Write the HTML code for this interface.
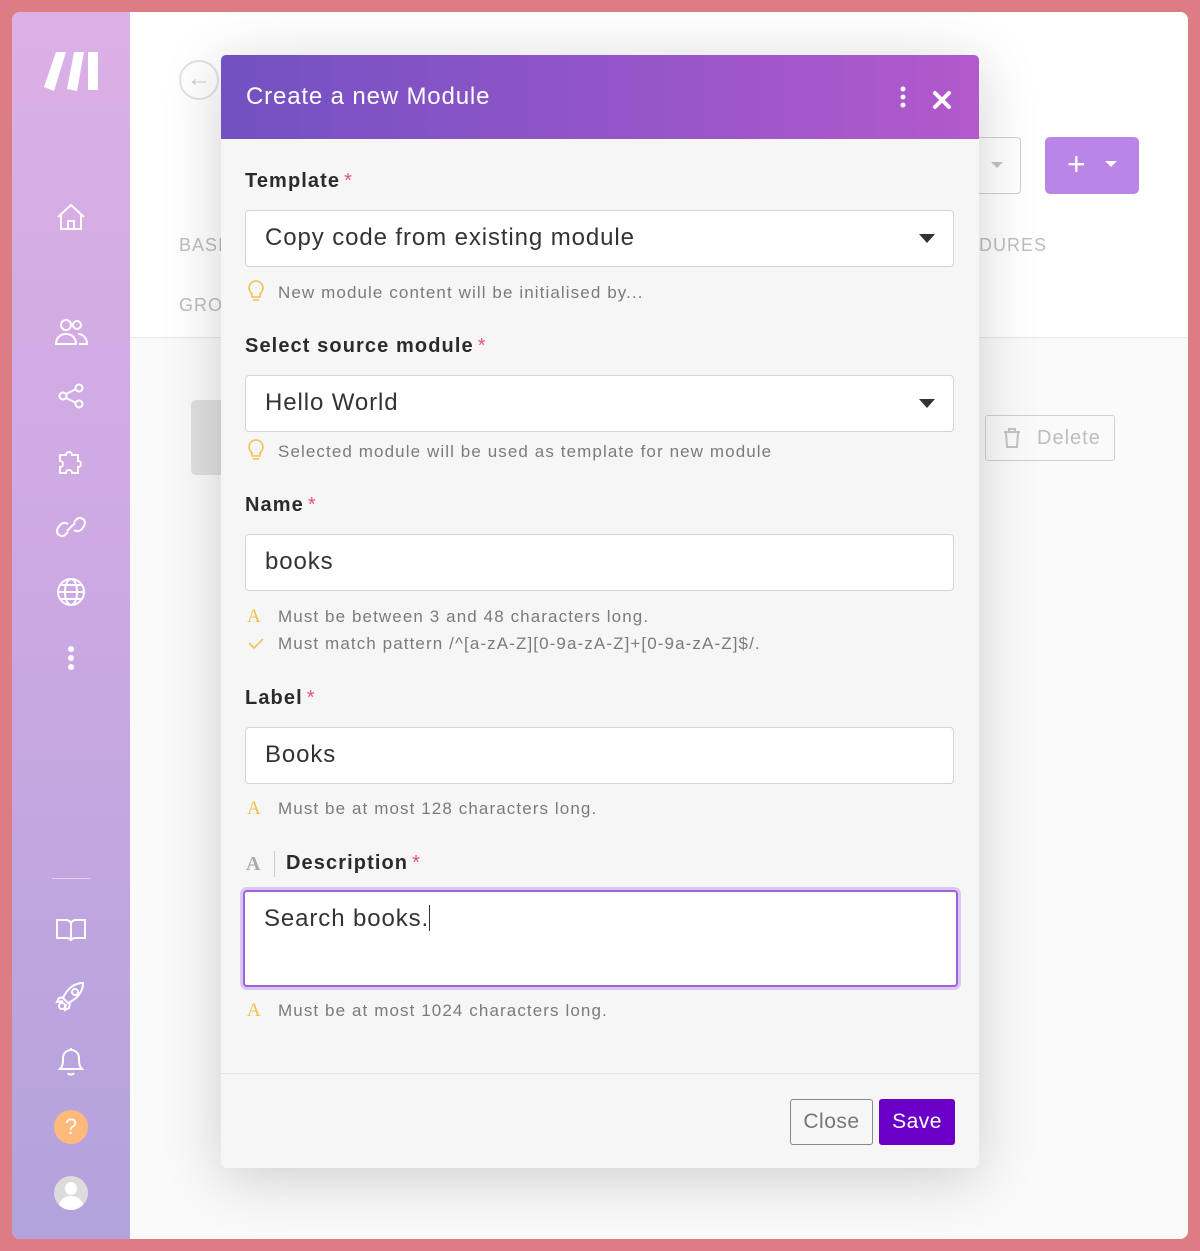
<!DOCTYPE html>
<html><head><meta charset="utf-8"><style>
*{box-sizing:border-box;margin:0;padding:0}
body{width:1200px;height:1251px;background:#dc7c83;font-family:"Liberation Sans",sans-serif;position:relative;overflow:hidden}
.win{position:absolute;left:12px;top:12px;width:1176px;height:1227px;border-radius:8px;overflow:hidden;background:#f7f7f8}
.side{position:absolute;left:0;top:0;width:118px;height:100%;background:linear-gradient(180deg,#dbb0e7 0%,#cda9e2 45%,#b3a2dc 100%)}
.main{position:absolute;left:118px;top:0;right:0;height:100%;background:#fafafa}
.a{position:absolute}
.ic{position:absolute;left:40px;width:38px;height:38px}
.modal{position:absolute;left:221px;top:55px;width:758px;height:1113px;background:#f6f6f6;border-radius:5px;box-shadow:0 10px 60px rgba(0,0,0,.18);overflow:hidden}
.hd{height:84px;background:linear-gradient(90deg,#7251c2,#b259cd);color:#fff;font-size:24px;padding:28px 0 0 25px;letter-spacing:.85px}
.lbl{position:absolute;left:24px;font-size:20px;font-weight:bold;color:#2b2b2b;letter-spacing:1.1px}
.lbl i{color:#e5556e;font-style:normal;font-weight:normal;margin-left:4px}
.inp{position:absolute;left:24px;width:709px;height:57px;background:#fff;border:1px solid #d5d5d5;border-radius:4px;font-size:24px;color:#333;padding:13px 0 0 19px;letter-spacing:.9px}
.car{position:absolute;right:18px;top:23px;width:0;height:0;border-left:8px solid transparent;border-right:8px solid transparent;border-top:9px solid #333}
.hint{position:absolute;left:57px;font-size:17px;color:#7b7b7b;letter-spacing:1.1px}
.hi{position:absolute;left:26px;font-size:19px;color:#f3bf4e;font-family:"Liberation Serif",serif}
</style></head><body>
<div class="win">
 <div class="side">
  <svg class="a" style="left:30px;top:38px" width="60" height="42" viewBox="0 0 60 42"><g fill="#fff"><path d="M14 2h10L12 41 2 37z"/><path d="M32 2h10l-7 39-10-2z"/><rect x="46" y="2" width="10" height="38"/></g></svg>
  <svg class="ic" style="top:187px" viewBox="0 0 38 38" fill="none" stroke="#fff" stroke-width="2"><path d="M6 18L19 6l13 12M9 16v14h20V16M16 30v-8h6v8"/></svg>
  <svg class="ic" style="top:300px" viewBox="0 0 38 38" fill="none" stroke="#fff" stroke-width="2"><circle cx="14" cy="13" r="5"/><path d="M4 32c0-6 4-10 10-10s10 4 10 10z"/><circle cx="25" cy="13" r="4"/><path d="M26 22c5 0 9 4 9 10h-8"/></svg>
  <svg class="ic" style="top:365px" viewBox="0 0 38 38" fill="none" stroke="#fff" stroke-width="2"><circle cx="11" cy="19" r="3.5"/><circle cx="27" cy="11" r="3.5"/><circle cx="27" cy="27" r="3.5"/><path d="M14 17l10-5M14 21l10 5"/></svg>
  <svg class="ic" style="top:431px" viewBox="0 0 38 38" fill="none" stroke="#fff" stroke-width="2"><path d="M8 12h6a3 3 0 116 0h6v6a3 3 0 110 6v6h-6a3 3 0 10-6 0H8v-6a3 3 0 100-6z"/></svg>
  <svg class="ic" style="top:496px" viewBox="0 0 38 38" fill="none" stroke="#fff" stroke-width="2"><path d="M16 16a6 6 0 00-8 1l-2 3a5 5 0 008 6l2-2"/><path d="M22 22a6 6 0 008-1l2-3a5 5 0 00-8-6l-2 2"/><path d="M15 23l8-8"/></svg>
  <svg class="ic" style="top:561px" viewBox="0 0 38 38" fill="none" stroke="#fff" stroke-width="2"><circle cx="19" cy="19" r="13"/><ellipse cx="19" cy="19" rx="6" ry="13"/><path d="M6 19h26M8 12h22M8 26h22"/></svg>
  <svg class="ic" style="top:627px" viewBox="0 0 38 38" fill="#fff"><circle cx="19" cy="10" r="3"/><circle cx="19" cy="19" r="3"/><circle cx="19" cy="28" r="3"/></svg>
  <div class="a" style="left:40px;top:866px;width:38px;height:1px;background:rgba(255,255,255,.45)"></div>
  <svg class="ic" style="top:899px" viewBox="0 0 38 38" fill="none" stroke="#fff" stroke-width="2"><path d="M5 9h9c3 0 5 2 5 4v17c0-2-2-3-5-3H5zM33 9h-9c-3 0-5 2-5 4v17c0-2 2-3 5-3h9z"/></svg>
  <svg class="ic" style="top:965px" viewBox="0 0 38 38" fill="none" stroke="#fff" stroke-width="2"><path d="M14 24l-3-3c4-9 11-15 20-15 0 9-6 16-15 20z"/><circle cx="23" cy="15" r="3"/><path d="M12 20l-5 1-2 4 6-1M18 26l-1 5-4 2 1-6"/><circle cx="10" cy="29" r="3"/></svg>
  <svg class="ic" style="top:1030px" viewBox="0 0 38 38" fill="none" stroke="#fff" stroke-width="2"><path d="M8 27c3-3 3-6 3-11a8 8 0 0116 0c0 5 0 8 3 11zM19 6V8M16 31c1 2 5 2 6 0"/></svg>
  <div class="a" style="left:42px;top:1098px;width:34px;height:34px;border-radius:50%;background:#fdba7a;color:#fff;font-size:22px;text-align:center;line-height:34px">?</div>
  <div class="a" style="left:42px;top:1164px;width:34px;height:34px;border-radius:50%;background:#dcdcdc;overflow:hidden"><div class="a" style="left:11px;top:6px;width:12px;height:13px;border-radius:50%;background:#fff"></div><div class="a" style="left:5px;top:20px;width:24px;height:20px;border-radius:50%;background:#fff"></div></div>
 </div>
 <div class="main">
  <div class="a" style="left:0;top:0;right:0;height:326px;background:#fff;border-bottom:1px solid #e8e8e8"></div>
  <div class="a" style="left:49px;top:48px;width:40px;height:40px;border:2px solid #e2e2e2;border-radius:50%;color:#ccc;font-size:24px;text-align:center;line-height:34px">←</div>
  <div class="a" style="left:49px;top:223px;font-size:18px;color:#bdbdbd;letter-spacing:1px">BASI</div>
  <div class="a" style="left:49px;top:283px;font-size:18px;color:#bdbdbd;letter-spacing:1px">GRO</div>
  <div class="a" style="left:849px;top:223px;font-size:18px;color:#bdbdbd;letter-spacing:1px">DURES</div>
  <div class="a" style="left:820px;top:125px;width:71px;height:57px;border:1px solid #d0d0d0;border-radius:4px"><div class="a" style="right:17px;top:24px;border-left:6px solid transparent;border-right:6px solid transparent;border-top:6px solid #c5c5c5"></div></div>
  <div class="a" style="left:915px;top:125px;width:94px;height:57px;background:#b985e6;border-radius:5px;color:#fff;font-size:32px;line-height:55px;padding-left:22px">+<div class="a" style="right:22px;top:24px;border-left:6px solid transparent;border-right:6px solid transparent;border-top:6px solid #fff"></div></div>
  <div class="a" style="left:61px;top:388px;width:40px;height:75px;background:#e0e0e0;border-radius:5px"></div>
  <div class="a" style="left:855px;top:403px;width:130px;height:46px;border:1px solid #d0d0d0;border-radius:3px;color:#bdbdbd;font-size:20px;padding:11px 0 0 51px;letter-spacing:1px">Delete
   <svg class="a" style="left:16px;top:11px" width="20" height="22" viewBox="0 0 20 22" fill="none" stroke="#c4c4c4" stroke-width="2"><path d="M2 5h16M7 5V2h6v3M4 5l1 15h10l1-15"/></svg></div>
 </div>
</div>
<div class="modal">
 <div class="hd">Create a new Module
  <svg class="a" style="left:676px;top:30px" width="12" height="24" viewBox="0 0 12 24" fill="#fff"><circle cx="6" cy="4" r="2.5"/><circle cx="6" cy="12" r="2.5"/><circle cx="6" cy="20" r="2.5"/></svg>
  <svg class="a" style="left:711px;top:35px" width="20" height="20" viewBox="0 0 20 20" stroke="#fff" stroke-width="4" stroke-linecap="round"><path d="M3 3l14 14M17 3L3 17"/></svg>
 </div>
 <div class="lbl" style="top:115px">Template<i>*</i></div>
 <div class="inp" style="top:155px">Copy code from existing module<div class="car"></div></div>
 <svg class="a" style="left:27px;top:224px" width="16" height="24" viewBox="0 0 16 24" fill="none" stroke="#f3c257" stroke-width="1.6"><path d="M4 15c-2-2-3-4-3-6a7 7 0 0114 0c0 2-1 4-3 6v3H4zM5 21h6"/></svg>
 <div class="hint" style="top:228px">New module content will be initialised by...</div>
 <div class="lbl" style="top:280px">Select source module<i>*</i></div>
 <div class="inp" style="top:320px">Hello World<div class="car"></div></div>
 <svg class="a" style="left:27px;top:383px" width="16" height="24" viewBox="0 0 16 24" fill="none" stroke="#f3c257" stroke-width="1.6"><path d="M4 15c-2-2-3-4-3-6a7 7 0 0114 0c0 2-1 4-3 6v3H4zM5 21h6"/></svg>
 <div class="hint" style="top:387px">Selected module will be used as template for new module</div>
 <div class="lbl" style="top:439px">Name<i>*</i></div>
 <div class="inp" style="top:479px">books</div>
 <div class="hi" style="top:551px">A</div>
 <div class="hint" style="top:552px">Must be between 3 and 48 characters long.</div>
 <svg class="a" style="left:27px;top:583px" width="16" height="12" viewBox="0 0 16 12" fill="none" stroke="#f3c257" stroke-width="1.6"><path d="M1 5l5 5 9-9"/></svg>
 <div class="hint" style="top:579px">Must match pattern /^[a-zA-Z][0-9a-zA-Z]+[0-9a-zA-Z]$/.</div>
 <div class="lbl" style="top:632px">Label<i>*</i></div>
 <div class="inp" style="top:672px">Books</div>
 <div class="hi" style="top:743px">A</div>
 <div class="hint" style="top:744px">Must be at most 128 characters long.</div>
 <div class="a" style="left:25px;top:798px;font-size:20px;color:#aaa;font-family:'Liberation Serif',serif;font-weight:bold">A</div>
 <div class="a" style="left:53px;top:796px;width:1px;height:26px;background:#ccc"></div>
 <div class="lbl" style="top:797px;left:65px">Description<i>*</i></div>
 <div class="inp" style="top:835px;left:22px;width:715px;height:97px;border:2px solid #9d62e0;box-shadow:0 0 0 3px #dcc6f4;padding-top:13px">Search books.<span style="display:inline-block;width:1px;height:26px;background:#333;vertical-align:-5px"></span></div>
 <div class="hi" style="top:945px">A</div>
 <div class="hint" style="top:946px">Must be at most 1024 characters long.</div>
 <div class="a" style="left:0;top:1018px;width:100%;height:1px;background:#e4e4e4"></div>
 <div class="a" style="left:569px;top:1044px;width:83px;height:46px;border:1px solid #888;border-radius:3px;font-size:21px;color:#777;text-align:center;line-height:44px;letter-spacing:.5px">Close</div>
 <div class="a" style="left:658px;top:1044px;width:76px;height:46px;background:#6a00c8;border-radius:3px;font-size:21px;color:#fff;text-align:center;line-height:46px;letter-spacing:.5px">Save</div>
</div>
</body></html>
